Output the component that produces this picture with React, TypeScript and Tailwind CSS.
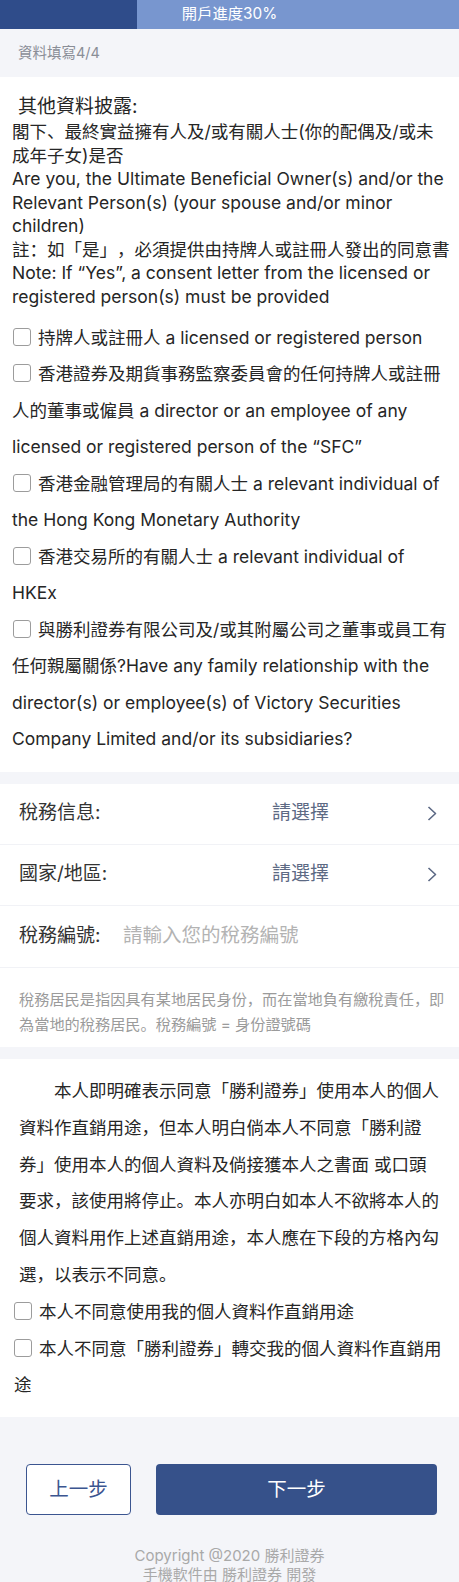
import React, { useState } from 'react';

const disclosures = [
  '持牌人或註冊人 a licensed or registered person',
  '香港證券及期貨事務監察委員會的任何持牌人或註冊人的董事或僱員 a director or an employee of any licensed or registered person of the “SFC”',
  '香港金融管理局的有關人士 a relevant individual of the Hong Kong Monetary Authority',
  '香港交易所的有關人士 a relevant individual of HKEx',
  '與勝利證券有限公司及/或其附屬公司之董事或員工有任何親屬關係?Have any family relationship with the director(s) or employee(s) of Victory Securities Company Limited and/or its subsidiaries?',
];

const optOuts = [
  '本人不同意使用我的個人資料作直銷用途',
  '本人不同意「勝利證券」轉交我的個人資料作直銷用途',
];

function Box({ checked, onClick }: { checked: boolean; onClick: () => void }) {
  return (
    <span
      onClick={onClick}
      className={`inline-block w-[18px] h-[18px] border rounded-[3px] align-middle relative -top-[2px] mr-[7px] cursor-pointer ${
        checked ? 'bg-[#36518a] border-[#36518a]' : 'bg-white border-[#9c9c9c]'
      }`}
    />
  );
}

function Chevron() {
  return (
    <svg width="10" height="15" viewBox="0 0 10 15" fill="none">
      <polyline points="1.5,1 8.5,7.5 1.5,14" stroke="#5b6884" strokeWidth="1.6" strokeLinejoin="round" />
    </svg>
  );
}

export default function App() {
  const [picked, setPicked] = useState<boolean[]>(disclosures.map(() => false));
  const [declined, setDeclined] = useState<boolean[]>(optOuts.map(() => false));
  const [taxNo, setTaxNo] = useState('');

  const toggle = (list: boolean[], set: (v: boolean[]) => void, i: number) =>
    set(list.map((v, j) => (j === i ? !v : v)));

  return (
    <div className="w-[459px] min-h-screen bg-[#f4f5f9] text-[#262626] [text-spacing-trim:space-all] font-['Inter','Noto_Sans_CJK_SC',sans-serif]">
      {/* progress bar */}
      <div className="relative h-[29px] bg-[#7896cf]">
        <div className="h-full w-[137px] bg-[#2f4c8a]" />
        <div className="absolute inset-0 flex items-center justify-center text-white text-[15.3px]">開戶進度30%</div>
      </div>

      <div className="h-[48px] flex items-center px-[18px] text-[14.5px] text-[#8a8e97]">資料填寫4/4</div>

      {/* disclosure section */}
      <section className="bg-white pl-[12px] pr-[6px] pt-[18px] pb-[14px]">
        <div className="text-[19px] leading-[24px] pl-[6px]">其他資料披露:</div>
        <div className="mt-[1px] text-[17.5px] leading-[23.5px]">
          <div>
            閣下、最終實益擁有人及/或有關人士(你的配偶及/或未
            <br />
            成年子女)是否
          </div>
          <div>Are you, the Ultimate Beneficial Owner(s) and/or the Relevant Person(s) (your spouse and/or minor children)</div>
          <div>註：如「是」，必須提供由持牌人或註冊人發出的同意書</div>
          <div>Note: If “Yes”, a consent letter from the licensed or registered person(s) must be provided</div>
        </div>
        <div className="mt-[11.5px] text-[17.5px] leading-[36.5px]">
          {disclosures.map((t, i) => (
            <div key={i}>
              <span className="ml-[1px]" />
              <Box checked={picked[i]} onClick={() => toggle(picked, setPicked, i)} />
              {t}
            </div>
          ))}
        </div>
      </section>

      {/* tax section */}
      <section className="mt-[12px] bg-white">
        <div className="h-[61px] flex items-center border-b border-[#f1f2f6] pl-[19px] pr-[22px] text-[19px]">
          <span className="w-[253px] text-[#333]">稅務信息:</span>
          <span className="flex-1 text-[#5d6a84]">請選擇</span>
          <Chevron />
        </div>
        <div className="h-[61px] flex items-center border-b border-[#f1f2f6] pl-[19px] pr-[22px] text-[19px]">
          <span className="w-[253px] text-[#333]">國家/地區:</span>
          <span className="flex-1 text-[#5d6a84]">請選擇</span>
          <Chevron />
        </div>
        <div className="h-[62px] flex items-center border-b border-[#f1f2f6] pl-[19px] pr-[22px] text-[19px]">
          <span className="w-[104px] text-[#333]">稅務編號:</span>
          <input
            value={taxNo}
            onChange={(e) => setTaxNo(e.target.value)}
            placeholder="請輸入您的稅務編號"
            className="flex-1 min-w-0 outline-none bg-transparent text-[19.5px] text-[#333] placeholder:text-[#b3b3b3]"
          />
        </div>
        <p className="pl-[19px] pr-[11px] pt-[19px] pb-[10px] text-[15.2px] leading-[25px] text-[#9b9b9b]">
          稅務居民是指因具有某地居民身份，而在當地負有繳稅責任，即為當地的稅務居民。稅務編號 = 身份證號碼
        </p>
      </section>

      {/* direct marketing section */}
      <section className="mt-[12px] bg-white pt-[14.5px] pb-[12.5px] text-[17.5px] leading-[36.8px]">
        <p className="px-[19px] indent-[2em]">
          本人即明確表示同意「勝利證券」使用本人的個人資料作直銷用途，但本人明白倘本人不同意「勝利證券」使用本人的個人資料及倘接獲本人之書面 或口頭要求，該使用將停止。本人亦明白如本人不欲將本人的個人資料用作上述直銷用途，本人應在下段的方格內勾選，以表示不同意。
        </p>
        <div className="pl-[14px] pr-[10px]">
          {optOuts.map((t, i) => (
            <div key={i}>
              <Box checked={declined[i]} onClick={() => toggle(declined, setDeclined, i)} />
              {t}
            </div>
          ))}
        </div>
      </section>

      {/* actions */}
      <div className="flex gap-[25px] pl-[26px] pr-[22px] mt-[47px]">
        <button className="w-[105px] h-[51px] rounded-[4px] border-[1.5px] border-[#3b5590] text-[#3b5590] text-[19.5px] bg-white">
          上一步
        </button>
        <button className="flex-1 h-[51px] rounded-[4px] bg-[#36518a] text-white text-[19.5px]">下一步</button>
      </div>

      <div className="mt-[31px] pb-[12px] text-center text-[15px] leading-[19px] text-[#a9a9a9]">
        <div>Copyright @2020 勝利證券</div>
        <div>手機軟件由 勝利證券 開發</div>
      </div>
    </div>
  );
}
